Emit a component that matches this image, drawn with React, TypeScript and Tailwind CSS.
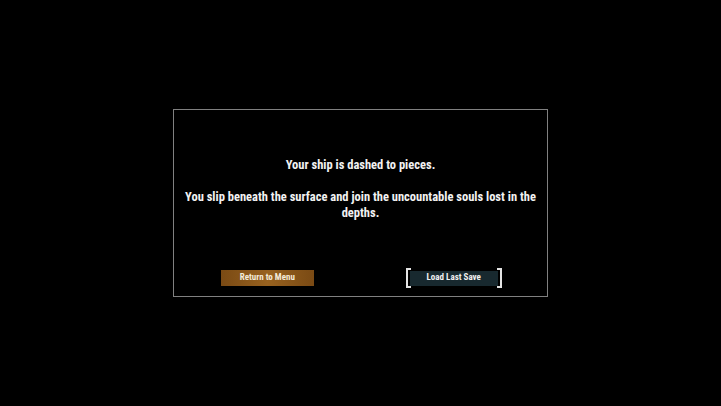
import React from "react";

// Narrow game-UI face: Roboto squeezed on its width axis
const condensed = {
	fontFamily: 'Roboto, "Open Sans", sans-serif',
	fontStretch: "75%",
};

function Bracket({ side }: { side: "left" | "right" }) {
	const pos = side === "left" ? "left-0 border-l-2" : "right-0 border-r-2";
	return <span className={`absolute top-0 bottom-0 w-[5px] border-y-2 border-[#e4e4e4] ${pos}`} />;
}

export default function App() {
	return (
		<div className="flex h-screen w-full items-center justify-center bg-black" style={condensed}>
			<div className="flex h-[188px] w-[375px] flex-col border border-[#808080] bg-black">
				<div className="px-2 pt-[47px] text-center text-[12.5px] font-bold leading-4 text-[#f2f2f2]">
					<p>Your ship is dashed to pieces.</p>
					<p className="mt-4">You slip beneath the surface and join the uncountable souls lost in the depths.</p>
				</div>
				<div className="mt-auto mb-2 grid grid-cols-2 items-center">
					<div className="flex justify-center">
						<button className="h-4 w-[93px] bg-gradient-to-r from-[#7a4a14] via-[#98621f] to-[#7a4a14] text-[9px] font-bold text-[#f3ead9]">
							Return to Menu
						</button>
					</div>
					<div className="flex justify-center">
						<button className="relative flex h-5 w-24 items-center justify-center">
							<Bracket side="left" />
							<Bracket side="right" />
							<span className="flex h-[15px] w-[88px] items-center justify-center bg-[#18292f] text-[9px] font-bold text-[#f0f0f0]">
								Load Last Save
							</span>
						</button>
					</div>
				</div>
			</div>
		</div>
	);
}
